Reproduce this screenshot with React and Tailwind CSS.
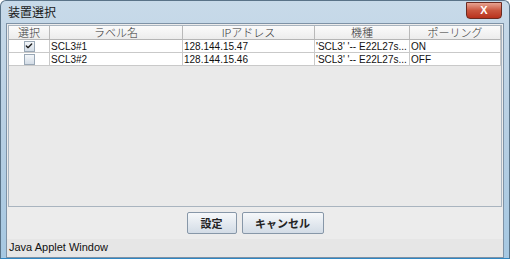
import { Check } from 'lucide-react'

const cols = [
	{ label: '選択', w: 'w-[41px]' },
	{ label: 'ラベル名', w: 'w-[133px]' },
	{ label: 'IPアドレス', w: 'w-[132px]' },
	{ label: '機種', w: 'w-[95px]' },
	{ label: 'ポーリング', w: 'flex-1' },
]

const rows = [
	{ checked: true, label: 'SCL3#1', ip: '128.144.15.47', model: "'SCL3' '-- E22L27s...", polling: 'ON' },
	{ checked: false, label: 'SCL3#2', ip: '128.144.15.46', model: "'SCL3' '-- E22L27s...", polling: 'OFF' },
]

const Cell = ({ w, children, center }) => (
	<div className={`${w} h-full shrink-0 border-r border-[#c9c9c9] px-[1px] overflow-hidden whitespace-nowrap ${center ? 'flex items-center justify-center' : 'leading-[13px]'}`}>
		{children}
	</div>
)

const Box = ({ checked }) => (
	<div className="flex h-[11px] w-[11px] items-center justify-center border border-[#9aa8b6] bg-gradient-to-b from-[#f4f7fa] to-[#d3dce6]">
		{checked && <Check className="h-[8px] w-[8px] text-[#1c1c1c]" strokeWidth={4} />}
	</div>
)

const App = () => {
	return (
		<div
			className="flex h-[259px] w-[510px] flex-col overflow-hidden rounded-t-[6px] border border-[#5a7388] border-b-[#2f86c2] bg-gradient-to-b from-[#c8dae9] via-[#b7cfe3] to-[#a6c8e2]"
			style={{ fontFamily: '"Liberation Sans", "Noto Sans CJK JP", sans-serif' }}
		>
			<div className="flex h-[22px] shrink-0 items-center justify-between pl-[7px] pr-[7px]">
				<span className="text-[12px] text-[#1a1a1a]" style={{ fontFamily: '"Noto Sans CJK JP", sans-serif' }}>装置選択</span>
				<div className="mt-[-4px] flex h-[17px] w-[36px] items-center justify-center rounded-b-[4px] border border-[#6b2a20] bg-gradient-to-b from-[#e7a391] via-[#c9553e] to-[#b8301c]">
					<span className="text-[11px] font-bold leading-none text-white">X</span>
				</div>
			</div>

			<div className="mx-[5px] mb-[5px] flex flex-1 flex-col border border-[#7e92a6] bg-[#ececec]">
				<div className="mx-px mt-px flex h-[182px] flex-col border border-[#a9b4bf] bg-[#eaeaea]">
					<div className="flex h-[14px] border-b border-[#b5b5b5] bg-gradient-to-b from-[#fbfbfb] to-[#ececec] text-[11px] leading-[13px] font-light text-[#333]" style={{ fontFamily: '"Noto Sans CJK JP", sans-serif' }}>
						{cols.map((c) => (
							<div key={c.label} className={`${c.w} shrink-0 border-r border-[#b9b9b9] text-center`}>
								{c.label}
							</div>
						))}
					</div>
					{rows.map((r) => (
						<div key={r.label} className="flex h-[13px] border-b border-[#c9c9c9] bg-white text-[10px] text-[#111]">
							<Cell w="w-[41px]" center>
								<Box checked={r.checked} />
							</Cell>
							<Cell w="w-[133px]">{r.label}</Cell>
							<Cell w="w-[132px]">{r.ip}</Cell>
							<Cell w="w-[95px]">{r.model}</Cell>
							<Cell w="flex-1">{r.polling}</Cell>
						</div>
					))}
				</div>

				<div className="flex h-[32px] items-center justify-center gap-[5px]" style={{ fontFamily: '"Noto Sans CJK JP", sans-serif' }}>
					<button className="h-[22px] w-[50px] rounded-[2px] border border-[#8797a8] bg-gradient-to-b from-[#f6f8fa] to-[#d3dce6] text-[11px] font-bold text-[#222]">
						設定
					</button>
					<button className="h-[22px] w-[82px] rounded-[2px] border border-[#8797a8] bg-gradient-to-b from-[#f6f8fa] to-[#d3dce6] text-[11px] font-bold text-[#222]">
						キャンセル
					</button>
				</div>

				<div className="flex flex-1 items-end bg-[#e6e6e6] px-[2px] pb-[1px] text-[11px] text-[#111]">
					Java Applet Window
				</div>
			</div>
		</div>
	)
}

export default App
